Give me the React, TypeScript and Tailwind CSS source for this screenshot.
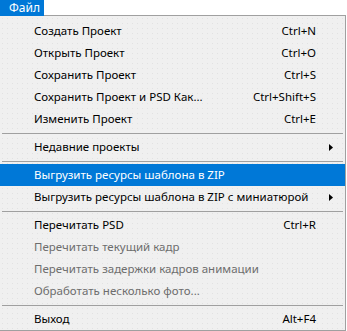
import React from "react";

type Item =
  | { type: "sep" }
  | {
      type: "item";
      label: string;
      shortcut?: string;
      disabled?: boolean;
      active?: boolean;
      submenu?: boolean;
    };

const items: Item[] = [
  { type: "item", label: "Создать Проект", shortcut: "Ctrl+N" },
  { type: "item", label: "Открыть Проект", shortcut: "Ctrl+O" },
  { type: "item", label: "Сохранить Проект", shortcut: "Ctrl+S" },
  { type: "item", label: "Сохранить Проект и PSD Как...", shortcut: "Ctrl+Shift+S" },
  { type: "item", label: "Изменить Проект", shortcut: "Ctrl+E" },
  { type: "sep" },
  { type: "item", label: "Недавние проекты", submenu: true },
  { type: "sep" },
  { type: "item", label: "Выгрузить ресурсы шаблона в ZIP", active: true },
  { type: "item", label: "Выгрузить ресурсы шаблона в ZIP с миниатюрой", submenu: true },
  { type: "sep" },
  { type: "item", label: "Перечитать PSD", shortcut: "Ctrl+R" },
  { type: "item", label: "Перечитать текущий кадр", disabled: true },
  { type: "item", label: "Перечитать задержки кадров анимации", disabled: true },
  { type: "item", label: "Обработать несколько фото...", disabled: true },
  { type: "sep" },
  { type: "item", label: "Выход", shortcut: "Alt+F4" },
];

function Arrow() {
  return (
    <svg width="4" height="7" viewBox="0 0 4 7" className="block">
      <path d="M0 0 L4 3.5 L0 7 Z" fill="#000" />
    </svg>
  );
}

export default function App() {
  return (
    <div
      className="w-[347px] h-[331px] bg-white overflow-hidden text-[11.5px] leading-none"
      style={{ fontFamily: '"Noto Sans", "Open Sans", sans-serif' }}
    >
      <div className="h-[15px] flex bg-white">
        <div className="relative z-10 h-[16px] w-[44px] bg-[#0078d7] text-white text-[12px] flex items-center pl-[9px]">
          Файл
        </div>
      </div>
      <div className="w-[346px] h-[316px] bg-[#f0f0f0] bg-[radial-gradient(#e2e2e2_0.7px,transparent_0.8px)] bg-[length:5px_5px] border-t border-r border-b border-[#a0a0a0] pt-[4px]">
        {items.map((it, i) =>
          it.type === "sep" ? (
            <div key={i} className="h-[6px] flex items-center pl-[2px] pr-[2px]">
              <div className="h-px w-full bg-[#a0a0a0]" />
            </div>
          ) : (
            <div
              key={i}
              className={
                "h-[22px] flex items-center pl-[34px] pr-[29px] " +
                (it.active ? "bg-[#0078d7] text-white" : it.disabled ? "text-[#6d6d6d]" : "text-black")
              }
            >
              <span className="flex-1 whitespace-nowrap">{it.label}</span>
              {it.shortcut && <span className="whitespace-nowrap">{it.shortcut}</span>}
              {it.submenu && (
                <span className="mr-[-17px]">
                  <Arrow />
                </span>
              )}
            </div>
          )
        )}
      </div>
    </div>
  );
}
